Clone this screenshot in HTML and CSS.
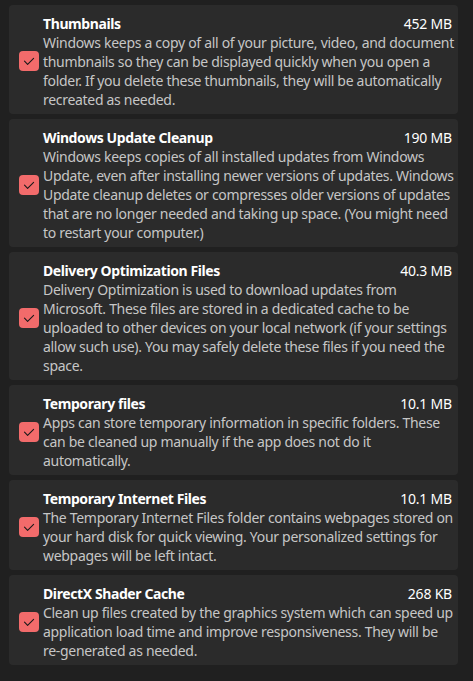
FILE: index.html
```html
<!DOCTYPE html>
<html>
<head>
<meta charset="utf-8">
<link rel="stylesheet" href="styles.css">
</head>
<body>
<div class="list">
  <div class="card">
    <div class="check"><svg viewBox="0 0 20 20" width="20" height="20"><path d="M5.5 10.2 L8.6 13.3 L14.6 7.3" fill="none" stroke="#1a1a1a" stroke-width="1.1" stroke-linecap="round" stroke-linejoin="round"/></svg></div>
    <div class="body">
      <div class="head"><span class="title">Thumbnails</span><span class="size">452 MB</span></div>
      <div class="desc">Windows keeps a copy of all of your picture, video, and document<br>thumbnails so they can be displayed quickly when you open a<br>folder. If you delete these thumbnails, they will be automatically<br>recreated as needed.</div>
    </div>
  </div>
  <div class="card">
    <div class="check"><svg viewBox="0 0 20 20" width="20" height="20"><path d="M5.5 10.2 L8.6 13.3 L14.6 7.3" fill="none" stroke="#1a1a1a" stroke-width="1.1" stroke-linecap="round" stroke-linejoin="round"/></svg></div>
    <div class="body">
      <div class="head"><span class="title">Windows Update Cleanup</span><span class="size">190 MB</span></div>
      <div class="desc">Windows keeps copies of all installed updates from Windows<br>Update, even after installing newer versions of updates. Windows<br>Update cleanup deletes or compresses older versions of updates<br>that are no longer needed and taking up space. (You might need<br>to restart your computer.)</div>
    </div>
  </div>
  <div class="card">
    <div class="check"><svg viewBox="0 0 20 20" width="20" height="20"><path d="M5.5 10.2 L8.6 13.3 L14.6 7.3" fill="none" stroke="#1a1a1a" stroke-width="1.1" stroke-linecap="round" stroke-linejoin="round"/></svg></div>
    <div class="body">
      <div class="head"><span class="title">Delivery Optimization Files</span><span class="size">40.3 MB</span></div>
      <div class="desc">Delivery Optimization is used to download updates from<br>Microsoft. These files are stored in a dedicated cache to be<br>uploaded to other devices on your local network (if your settings<br>allow such use). You may safely delete these files if you need the<br>space.</div>
    </div>
  </div>
  <div class="card">
    <div class="check"><svg viewBox="0 0 20 20" width="20" height="20"><path d="M5.5 10.2 L8.6 13.3 L14.6 7.3" fill="none" stroke="#1a1a1a" stroke-width="1.1" stroke-linecap="round" stroke-linejoin="round"/></svg></div>
    <div class="body">
      <div class="head"><span class="title">Temporary files</span><span class="size">10.1 MB</span></div>
      <div class="desc">Apps can store temporary information in specific folders. These<br>can be cleaned up manually if the app does not do it<br>automatically.</div>
    </div>
  </div>
  <div class="card">
    <div class="check"><svg viewBox="0 0 20 20" width="20" height="20"><path d="M5.5 10.2 L8.6 13.3 L14.6 7.3" fill="none" stroke="#1a1a1a" stroke-width="1.1" stroke-linecap="round" stroke-linejoin="round"/></svg></div>
    <div class="body">
      <div class="head"><span class="title">Temporary Internet Files</span><span class="size">10.1 MB</span></div>
      <div class="desc">The Temporary Internet Files folder contains webpages stored on<br>your hard disk for quick viewing. Your personalized settings for<br>webpages will be left intact.</div>
    </div>
  </div>
  <div class="card">
    <div class="check"><svg viewBox="0 0 20 20" width="20" height="20"><path d="M5.5 10.2 L8.6 13.3 L14.6 7.3" fill="none" stroke="#1a1a1a" stroke-width="1.1" stroke-linecap="round" stroke-linejoin="round"/></svg></div>
    <div class="body">
      <div class="head"><span class="title">DirectX Shader Cache</span><span class="size">268 KB</span></div>
      <div class="desc">Clean up files created by the graphics system which can speed up<br>application load time and improve responsiveness. They will be<br>re-generated as needed.</div>
    </div>
  </div>
</div>
</body>
</html>
```
FILE: styles.css
```css
html, body {
  margin: 0;
  padding: 0;
  background: #202020;
  height: 100%;
}
body {
  font-family: "Noto Sans", "Open Sans", sans-serif;
  font-size: 14px;
  letter-spacing: -0.3px;
  color: #fff;
}
.list {
  display: flex;
  flex-direction: column;
  gap: 5px;
  padding: 5px 15px 0 9px;
}
.card {
  background: #2b2b2b;
  border-radius: 4px;
  display: flex;
  align-items: center;
  padding: 8px 6px 5px 10px;
}
.check {
  width: 20px;
  height: 20px;
  border-radius: 4px;
  background: #f26b6b;
  flex: none;
  margin-right: 4px;
  display: flex;
}
.body {
  flex: 1;
  min-width: 0;
}
.head {
  display: flex;
  justify-content: space-between;
  align-items: center;
  height: 20px;
}
.title {
  font-weight: 700;
  color: #fff;
  letter-spacing: -0.4px;
}
.size {
  color: #fff;
  letter-spacing: -0.2px;
}
.desc {
  color: #c6c6c6;
  line-height: 19px;
  white-space: nowrap;
}
```
